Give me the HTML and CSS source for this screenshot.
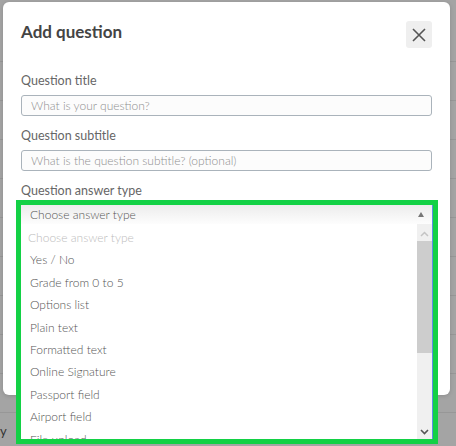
FILE: index.html
```html
<!DOCTYPE html>
<html lang="en">
<head>
    <meta charset="UTF-8">
    <meta name="viewport" content="width=device-width, initial-scale=1.0">
    <title>Add question</title>
    <link rel="stylesheet" href="styles.css">
</head>
<body>
    <div class="page">
        <div class="page-row"></div>
        <div class="page-row"></div>
        <div class="page-row"></div>
        <div class="page-row"></div>
        <div class="page-row"></div>
        <div class="page-row"></div>
        <div class="page-row"></div>
        <div class="page-row"></div>
        <div class="page-row"></div>
        <div class="page-row"></div>
        <div class="page-row"><span class="page-text">y</span></div>
    </div>

    <div class="modal">
        <div class="modal-header">
            <h2 class="modal-title">Add question</h2>
            <button class="close-btn" aria-label="Close">
                <svg width="14" height="14" viewBox="0 0 14 14">
                    <path d="M1 1 L13 13 M13 1 L1 13" stroke="#555" stroke-width="1.6" fill="none"/>
                </svg>
            </button>
        </div>

        <label class="field-label">Question title</label>
        <input class="text-input" type="text" placeholder="What is your question?">

        <label class="field-label">Question subtitle</label>
        <input class="text-input" type="text" placeholder="What is the question subtitle? (optional)">

        <label class="field-label">Question answer type</label>
        <div class="select-box">
            <div class="select-current">
                <span>Choose answer type</span>
                <span class="select-arrow"></span>
            </div>
            <div class="select-list">
                <ul class="options">
                    <li class="option option-disabled">Choose answer type</li>
                    <li class="option">Yes / No</li>
                    <li class="option">Grade from 0 to 5</li>
                    <li class="option">Options list</li>
                    <li class="option">Plain text</li>
                    <li class="option">Formatted text</li>
                    <li class="option">Online Signature</li>
                    <li class="option">Passport field</li>
                    <li class="option">Airport field</li>
                    <li class="option">File upload</li>
                </ul>
                <div class="scrollbar">
                    <div class="scroll-btn">
                        <svg width="9" height="6" viewBox="0 0 9 6"><path d="M1 5 L4.5 1.5 L8 5" stroke="#c4c4c4" stroke-width="1.5" fill="none"/></svg>
                    </div>
                    <div class="scroll-thumb"></div>
                    <div class="scroll-track"></div>
                    <div class="scroll-btn">
                        <svg width="9" height="6" viewBox="0 0 9 6"><path d="M1 1 L4.5 4.5 L8 1" stroke="#555" stroke-width="1.6" fill="none"/></svg>
                    </div>
                </div>
            </div>
        </div>
    </div>
</body>
</html>
```

FILE: styles.css
```css
body {
    margin: 0;
    width: 456px;
    height: 446px;
    overflow: hidden;
    background-color: #a4a4a4;
    font-family: Lato, "Open Sans", Arial, sans-serif;
    position: relative;
}

.page {
    padding-top: 23px;
}

.page-row {
    height: 38px;
    border-bottom: 1px solid #979797;
    position: relative;
}

.page-text {
    position: absolute;
    left: 0;
    top: 10px;
    font-size: 13px;
    color: #333;
}

.modal {
    position: absolute;
    top: 2px;
    left: 3px;
    width: 447px;
    height: 393px;
    box-sizing: border-box;
    padding: 19px 18px 0;
    background-color: #fff;
    border-radius: 6px;
    box-shadow: 0 1px 4px rgba(0,0,0,0.15);
}

.modal-header {
    display: flex;
    justify-content: space-between;
    align-items: flex-start;
    height: 27px;
}

.modal-title {
    margin: 0;
    font-size: 17px;
    line-height: 21px;
    font-weight: bold;
    color: #444;
}

.close-btn {
    width: 26px;
    height: 27px;
    border: none;
    border-radius: 3px;
    background-color: #efefef;
    padding: 0;
    display: flex;
    align-items: center;
    justify-content: center;
    cursor: pointer;
}

.field-label {
    display: block;
    font-size: 12.5px;
    line-height: 16px;
    color: #666;
    margin: 25px 0 6px;
}

.text-input + .field-label {
    margin-top: 12px;
}

.text-input {
    display: block;
    width: 100%;
    height: 21px;
    box-sizing: border-box;
    border: 1px solid #aab3bb;
    border-radius: 3px;
    background-color: #fcfcfc;
    padding: 0 9px;
    font-family: inherit;
    font-size: 12px;
    font-weight: 300;
    color: #555;
}

.text-input::placeholder {
    color: #8f8f8f;
}

.select-box {
    width: 412px;
    box-sizing: border-box;
    border-right: 1px solid #5b8de4;
    outline: 5px solid #13d145;
    margin-top: 6px;
    position: relative;
    z-index: 2;
}

.select-current {
    height: 19px;
    display: flex;
    align-items: center;
    justify-content: space-between;
    padding: 0 8px 0 9px;
    font-size: 12px;
    font-weight: 300;
    color: #555;
    background: linear-gradient(#ececec, #fdfdfd);
}

.select-arrow {
    width: 0;
    height: 0;
    border-left: 3px solid transparent;
    border-right: 3px solid transparent;
    border-bottom: 5px solid #777;
}

.select-list {
    display: flex;
    height: 215px;
    background-color: #fff;
    overflow: hidden;
}

.options {
    flex: 1;
    list-style: none;
    margin: 0;
    padding: 3px 0 0;
}

.option {
    height: 22.4px;
    line-height: 22.4px;
    padding-left: 9px;
    font-size: 12px;
    font-weight: 300;
    color: #555;
    white-space: nowrap;
}

.option-disabled {
    padding-left: 7px;
    color: #bcbcbc;
}

.scrollbar {
    width: 15px;
    display: flex;
    flex-direction: column;
    background-color: #f0f0f0;
    padding-top: 2px;
}

.scroll-btn {
    height: 15px;
    display: flex;
    align-items: center;
    justify-content: center;
    background-color: #f0f0f0;
}

.scroll-thumb {
    height: 112px;
    background-color: #cdcdcd;
}

.scroll-track {
    flex: 1;
}
```
